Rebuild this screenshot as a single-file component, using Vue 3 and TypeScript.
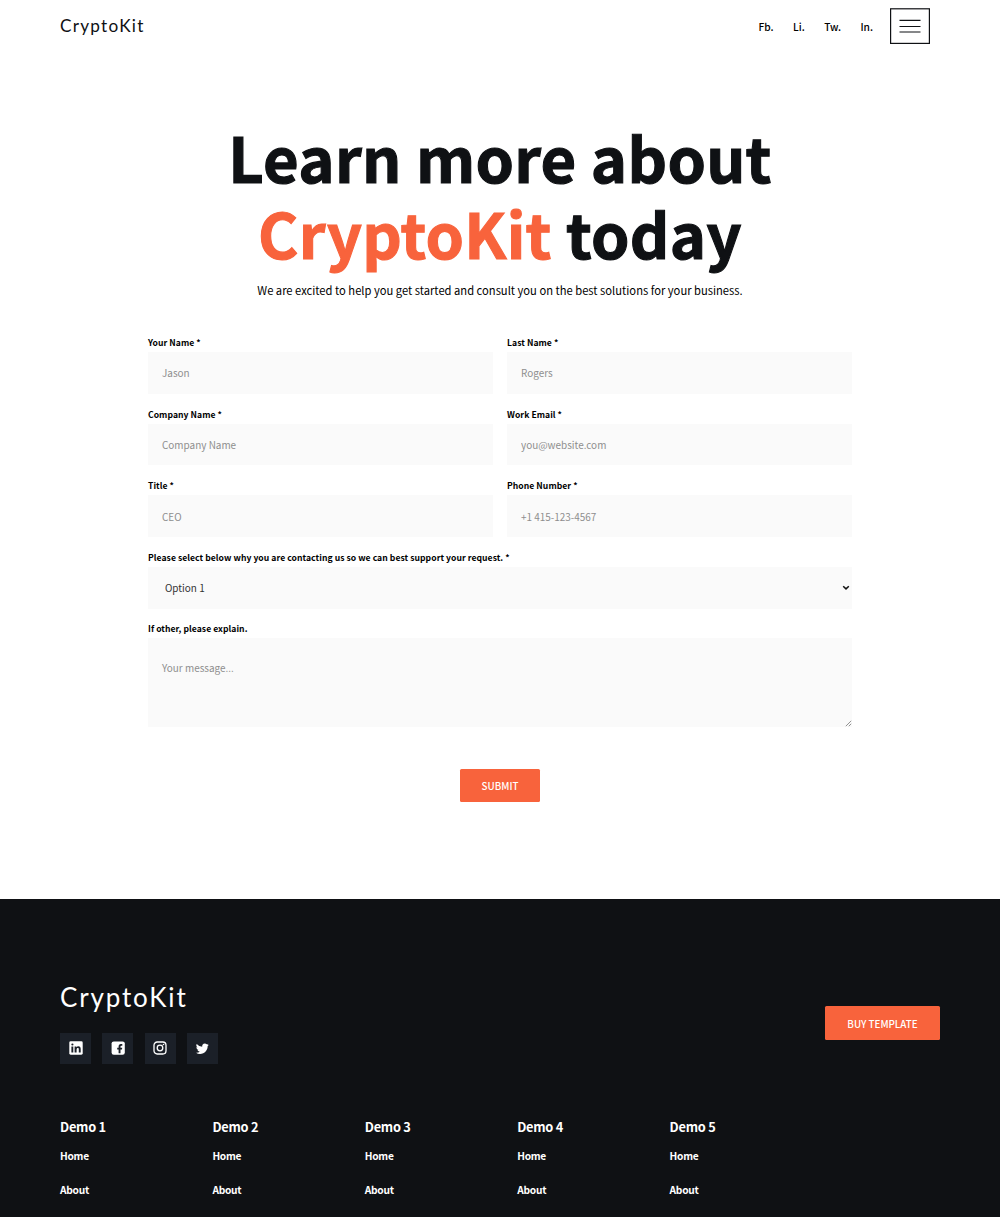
<script setup lang="ts">
interface Field { label: string; placeholder: string; type: string }

const socials: string[] = ['Fb.', 'Li.', 'Tw.', 'In.']

const fields: Field[] = [
  { label: 'Your Name *', placeholder: 'Jason', type: 'text' },
  { label: 'Last Name *', placeholder: 'Rogers', type: 'text' },
  { label: 'Company Name *', placeholder: 'Company Name', type: 'text' },
  { label: 'Work Email *', placeholder: 'you@website.com', type: 'email' },
  { label: 'Title *', placeholder: 'CEO', type: 'text' },
  { label: 'Phone Number *', placeholder: '+1 415-123-4567', type: 'tel' },
]

const demos: number[] = [1, 2, 3, 4, 5]
</script>

<template>
  <div class="page">
    <header class="header">
      <a class="logo">CryptoKit</a>
      <nav class="nav">
        <a v-for="s in socials" :key="s" class="nav-link">{{ s }}</a>
        <button class="menu" aria-label="Menu">
          <svg width="40" height="36" viewBox="0 0 40 36" fill="none" stroke="#0f1114">
            <rect x="0.6" y="0.8" width="38.8" height="34.6" stroke-width="1.2" />
            <path d="M9.5 12.4H30.5M9.5 18.5H30.5M9.5 24H30.5" stroke-width="1.1" />
          </svg>
        </button>
      </nav>
    </header>

    <main class="main">
      <h1 class="title">
        <span class="line">Learn more about</span>
        <span class="line"><span class="accent">CryptoKit</span> today</span>
      </h1>
      <p class="lead">We are excited to help you get started and consult you on the best solutions for your business.</p>

      <form class="form" @submit.prevent>
        <div class="grid">
          <label v-for="f in fields" :key="f.label" class="field">
            <span class="label">{{ f.label }}</span>
            <input class="control" :type="f.type" :placeholder="f.placeholder" />
          </label>
        </div>
        <label class="field">
          <span class="label">Please select below why you are contacting us so we can best support your request. *</span>
          <span class="select-wrap">
            <select class="control select"><option>Option 1</option></select>
            <svg class="chevron" width="8" height="6" viewBox="0 0 8 6" fill="none" stroke="#111" stroke-width="1.5"><path d="M1.2 1.3L4 3.9L6.8 1.3" /></svg>
          </span>
        </label>
        <label class="field field-area">
          <span class="label">If other, please explain.</span>
          <span class="area-wrap">
            <textarea class="control area" placeholder="Your message..."></textarea>
            <svg class="grip" width="7" height="7" viewBox="0 0 7 7" fill="none" stroke="#777" stroke-width="0.8"><path d="M0.8 6.2L6.2 0.8M3.8 6.2L6.2 3.8" /></svg>
          </span>
        </label>
        <button class="btn submit" type="submit">SUBMIT</button>
      </form>
    </main>

    <footer class="footer">
      <div class="footer-top">
        <div class="brand">
          <div class="logo logo-big">CryptoKit</div>
          <div class="icons">
            <a class="icon" aria-label="LinkedIn">
              <svg width="14" height="14" viewBox="0 0 14 14">
                <rect x="0.3" y="0.3" width="13.4" height="13.4" rx="1.4" fill="#fff" />
                <g fill="#1b2028"><circle cx="3.4" cy="3.5" r="1.1" /><path d="M2.4 5.4h1.9v6.1H2.4zM5.6 5.4h1.8v.8c.4-.6 1.1-1 2-1 1.7 0 2.3 1.1 2.3 2.8v3.5H9.8V8.3c0-.9-.3-1.4-1-1.4s-1.2.6-1.2 1.5v3.1h-2z" /></g>
              </svg>
            </a>
            <a class="icon" aria-label="Facebook">
              <svg width="14" height="14" viewBox="0 0 14 14">
                <rect x="0.6" y="0.4" width="13.2" height="13.3" rx="2.2" fill="#fff" />
                <path d="M7.6 12.2V8.4H6.2V6.700h1.400V5.500c0-1.600.8-2.500 2.300-2.500h1.400v1.700h-1c-.6 0-.8.3-.8.9v1.100h1.700l-.2 1.700H9.500v3.800z" fill="#1b2028" />
              </svg>
            </a>
            <a class="icon" aria-label="Instagram">
              <svg width="14" height="14" viewBox="0 0 14 14" fill="none" stroke="#fff" stroke-width="1.3">
                <rect x="1" y="1" width="12" height="12" rx="3.2" />
                <circle cx="7" cy="7" r="2.8" />
                <circle cx="10.5" cy="3.5" r="0.8" fill="#fff" stroke="none" />
              </svg>
            </a>
            <a class="icon" aria-label="Twitter">
              <svg width="13" height="13" viewBox="0 0 24 24" fill="#fff">
                <path d="M23.6 4.9a9.6 9.6 0 0 1-2.8.8 4.9 4.9 0 0 0 2.1-2.7 9.7 9.7 0 0 1-3.1 1.2A4.9 4.9 0 0 0 11.5 8.6 13.9 13.9 0 0 1 1.4 3.5a4.9 4.9 0 0 0 1.5 6.5 4.9 4.9 0 0 1-2.2-.6 4.9 4.9 0 0 0 3.9 4.9 4.9 4.9 0 0 1-2.2.1 4.9 4.9 0 0 0 4.6 3.4A9.9 9.9 0 0 1 0 19.8a13.9 13.9 0 0 0 7.5 2.200c9.100 0 14.300-7.700 14-14.600a10 10 0 0 0 2.100-2.500z" />
              </svg>
            </a>
          </div>
        </div>
        <a class="btn buy">BUY TEMPLATE</a>
      </div>

      <div class="columns">
        <div v-for="n in demos" :key="n" class="column">
          <h2 class="column-title">Demo {{ n }}</h2>
          <a class="column-link">Home</a>
          <a class="column-link">About</a>
        </div>
      </div>
    </footer>
  </div>
</template>

<style>
body { margin: 0; background: #fff; }
</style>

<style scoped>
.page {
  width: 1000px;
  height: 1217px;
  overflow: hidden;
  display: flex;
  flex-direction: column;
  font-family: "Noto Sans CJK SC", "Noto Sans", sans-serif;
  color: #0f1114;
  background: #fff;
}
.header {
  height: 52px;
  padding: 0 70px 0 60px;
  display: flex;
  align-items: center;
  justify-content: space-between;
  flex: none;
}
.logo {
  font-family: Lato, sans-serif;
  font-size: 17.2px;
  line-height: 24px;
  letter-spacing: 1.25px;
  color: #0f1114;
}
.nav { display: flex; align-items: center; }
.nav-link {
  font-size: 10.2px;
  line-height: 16px;
  font-weight: 500;
  color: #000;
  margin-right: 19.5px;
  padding-top: 1.5px;
}
.nav-link:nth-child(4) { margin-right: 17px; }
.menu { padding: 0; border: 0; background: none; display: flex; width: 40px; height: 36px; }
.main {
  height: 847px;
  flex: none;
  box-sizing: border-box;
  padding: 67px 148px 0;
}
.title {
  margin: 0;
  font-size: 61.5px;
  line-height: 76px;
  font-weight: 700;
  letter-spacing: 0.28px;
  text-align: center;
  white-space: nowrap;
  -webkit-text-stroke: 1.1px currentColor;
}
.line { display: block; }
.accent { color: #f8633c; }
.lead {
  margin: 10px 0 0;
  font-size: 11.2px;
  line-height: 18px;
  text-align: center;
  white-space: nowrap;
  color: #000;
}
.form { margin-top: 36px; display: flex; flex-direction: column; }
.grid { display: grid; grid-template-columns: 1fr 1fr; column-gap: 14px; }
.field { display: flex; flex-direction: column; height: 71.6px; }
.field-area { height: auto; }
.label {
  font-size: 8.6px;
  line-height: 15.4px;
  height: 17px;
  font-weight: 700;
  letter-spacing: 0.05px;
  white-space: nowrap;
  color: #000;
}
.control {
  box-sizing: border-box;
  display: block;
  width: 100%;
  height: 41.8px;
  margin: 0;
  padding: 0 14px;
  border: 0;
  border-radius: 0;
  outline: 0;
  background: #fafafa;
  font-family: inherit;
  font-size: 9.95px;
  line-height: 18px;
  color: #333;
}
.control::placeholder { color: #8e8e8e; opacity: 1; }
.select-wrap, .area-wrap { position: relative; display: block; }
.select { appearance: none; padding-left: 17px; }
.chevron { position: absolute; right: 2px; top: 18px; }
.area { height: 88.5px; padding-top: 20.5px; resize: none; }
.grip { position: absolute; right: 0; bottom: 0; }
.btn {
  box-sizing: border-box;
  border: 0;
  border-radius: 1.5px;
  background: #f8633c;
  color: #fff;
  font-family: inherit;
  font-weight: 500;
  font-size: 9.8px;
  line-height: 33px;
  height: 33px;
  padding: 1px 0 0;
  text-align: center;
  white-space: nowrap;
}
.submit { width: 80px; margin: 42px auto 0; }
.footer {
  flex: 1;
  background: #0f1114;
  color: #fff;
  padding: 83px 60px 0;
}
.footer-top { display: flex; justify-content: space-between; align-items: center; height: 82px; }
.logo-big { font-size: 26px; line-height: 26px; letter-spacing: 1.85px; color: #fff; padding: 1px 0 3px; }
.icons { display: flex; gap: 11.3px; margin-top: 20px; }
.icon {
  width: 31px;
  height: 31px;
  display: flex;
  align-items: center;
  justify-content: center;
  background: #1b2028;
}
.buy { width: 115px; height: 34px; line-height: 34px; }
.columns { display: flex; margin-top: 51px; }
.column { width: 152.4px; display: flex; flex-direction: column; }
.column-title { margin: 0 0 5px; font-size: 12.8px; line-height: 24px; font-weight: 700; letter-spacing: -0.25px; }
.column-link { font-size: 10.2px; line-height: 24px; margin-bottom: 9.5px; font-weight: 700; letter-spacing: -0.25px; color: #fff; }
</style>
